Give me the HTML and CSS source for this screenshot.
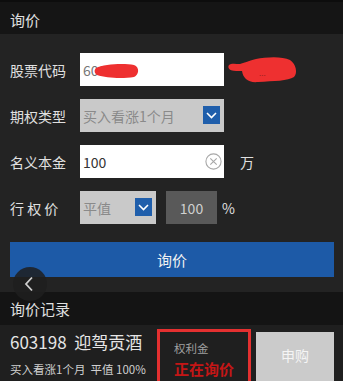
FILE: index.html
```
<!DOCTYPE html>
<html>
<head>
<meta charset="utf-8">
<link rel="stylesheet" href="styles.css">
</head>
<body>
<div class="page">
  <div class="topbar">询价</div>
  <div class="form">
    <div class="row">
      <span class="label">股票代码</span>
      <div class="field input">
        <span class="val code">600</span>
        <svg class="scribble1" width="46" height="18" viewBox="0 0 46 18"><path d="M2 6 C10 2 30 1 40 3 C46 5 45 13 40 15 C28 17 12 16 3 13 C0 11 0 8 2 6 Z" fill="#ee3030"/></svg>
      </div>
      <div class="side">
        <svg class="scribble2" width="72" height="28" viewBox="0 0 72 28"><path d="M3 9 C1 12 4 15 10 15 L16 15 C17 22 22 27 32 26 C48 25 62 25 68 21 C72 17 70 8 64 4 C56 0 40 1 30 3 C22 5 18 7 14 8 C10 8 5 7 3 9 Z" fill="#ee3030"/><text x="33" y="20" font-size="8" fill="#9a2020">...</text></svg>
      </div>
    </div>
    <div class="row">
      <span class="label">期权类型</span>
      <div class="field select">
        <span class="val muted">买入看涨1个月</span>
        <span class="chk"><svg width="11" height="7" viewBox="0 0 11 7"><path d="M1 1 L5.5 5.5 L10 1" fill="none" stroke="#fff" stroke-width="1.6"/></svg></span>
      </div>
    </div>
    <div class="row">
      <span class="label">名义本金</span>
      <div class="field input">
        <span class="val">100</span>
        <svg class="clear" width="17" height="17" viewBox="0 0 17 17"><circle cx="8.5" cy="8.5" r="7.6" fill="none" stroke="#a8a8a8" stroke-width="1.1"/><path d="M5.3 5.3 L11.7 11.7 M11.7 5.3 L5.3 11.7" stroke="#a8a8a8" stroke-width="1.1"/></svg>
      </div>
      <span class="unit">万</span>
    </div>
    <div class="row">
      <span class="label spaced">行 权 价</span>
      <div class="strike">
        <div class="field select small">
          <span class="val muted">平值</span>
          <span class="chk"><svg width="11" height="7" viewBox="0 0 11 7"><path d="M1 1 L5.5 5.5 L10 1" fill="none" stroke="#fff" stroke-width="1.6"/></svg></span>
        </div>
        <div class="pct">100</div>
        <span class="unit pctsign">%</span>
      </div>
    </div>
    <div class="btn">询价</div>
  </div>
  <div class="back"><svg width="10" height="16" viewBox="0 0 10 16"><path d="M8 1.5 L2 8 L8 14.5" fill="none" stroke="#cfcfcf" stroke-width="1.8"/></svg></div>
  <div class="sechead">询价记录</div>
  <div class="record">
    <div class="info">
      <div class="name">603198&nbsp;&nbsp;迎驾贡酒</div>
      <div class="desc">买入看涨1个月&nbsp;&nbsp;平值 100%</div>
    </div>
    <div class="premium">
      <div class="plabel">权利金</div>
      <div class="pstatus">正在询价</div>
    </div>
    <div class="buy">申购</div>
  </div>
</div>
</body>
</html>
```
FILE: styles.css
```
* { box-sizing: border-box; }
html, body { margin: 0; padding: 0; }
body {
  background: #232323;
  font-family: "Noto Sans CJK SC", "Noto Sans", sans-serif;
  color: #dcdcdc;
  width: 343px;
  height: 381px;
  overflow: hidden;
}
.page { position: relative; width: 343px; height: 381px; }
.topbar {
  height: 34px;
  background: #151515;
  border-top: 2px solid #0d0d0d;
  padding: 2px 0 0 10px;
  display: flex;
  align-items: center;
  font-size: 15px;
  color: #e0e0e0;
}
.form {
  padding: 19px 9px 0 10px;
  display: flex;
  flex-direction: column;
  gap: 13px;
}
.row {
  display: flex;
  align-items: center;
  height: 33px;
}
.label {
  width: 70px;
  font-size: 14px;
  color: #e0e0e0;
  white-space: nowrap;
}
.label.spaced { letter-spacing: 0px; word-spacing: 0; }
.field {
  position: relative;
  width: 144px;
  height: 33px;
  display: flex;
  align-items: center;
  padding-left: 3px;
}
.input { background: #ffffff; }
.select { background: #c9c9c9; }
.val { font-size: 14px; color: #333; }
.val.code { color: #777; }
.val.muted { color: #8a8a8a; }
.scribble1 { position: absolute; left: 14px; top: 9px; }
.side { position: relative; width: 80px; height: 33px; }
.scribble2 { position: absolute; left: 2px; top: 3px; }
.chk {
  position: absolute;
  right: 4px;
  top: 7px;
  width: 17px;
  height: 18px;
  background: #1f5eab;
  display: flex;
  align-items: center;
  justify-content: center;
}
.clear { position: absolute; right: 2px; top: 8px; }
.unit { font-size: 14px; color: #e0e0e0; margin-left: 16px; }
.strike { display: flex; align-items: center; }
.field.small { width: 76px; }
.chk { }
.pct {
  width: 51px;
  height: 33px;
  margin-left: 10px;
  background: #595959;
  color: #d0d0d0;
  font-size: 14px;
  display: flex;
  align-items: center;
  justify-content: center;
}
.pctsign { margin-left: 5px; }
.btn {
  margin-top: 5px;
  height: 35px;
  background: #1d5aa7;
  color: #f2f2f2;
  font-size: 15px;
  display: flex;
  align-items: center;
  justify-content: center;
}
.back {
  position: absolute;
  left: 13px;
  top: 267px;
  width: 34px;
  height: 34px;
  border-radius: 50%;
  background: rgba(30, 30, 30, 0.85);
  display: flex;
  align-items: center;
  justify-content: center;
  padding-right: 2px;
}
.sechead {
  margin-top: 15px;
  height: 33px;
  background: #141414;
  display: flex;
  align-items: center;
  padding-left: 10px;
  font-size: 15px;
  color: #e0e0e0;
}
.record {
  display: flex;
  height: 60px;
  background: #1f1f1f;
}
.info { width: 157px; padding-left: 10px; padding-top: 4px; }
.name { font-size: 17px; color: #e6e6e6; line-height: 26px; white-space: nowrap; }
.desc { font-size: 11.5px; color: #d0d0d0; line-height: 18px; margin-top: 5px; white-space: nowrap; }
.premium {
  margin-top: 4px;
  width: 94px;
  border: 3px solid #e43030;
  border-bottom: none;
  padding: 8px 0 0 14px;
}
.plabel { font-size: 11.5px; color: #a0a0a0; line-height: 16px; }
.pstatus { font-size: 15px; color: #c41616; font-weight: bold; line-height: 20px; margin-top: 3px; }
.buy {
  margin-top: 7px;
  margin-left: 5px;
  width: 78px;
  background: #cbcbcb;
  color: #f5f5f5;
  font-size: 14px;
  display: flex;
  align-items: center;
  justify-content: center;
  padding-bottom: 8px;
}
```
